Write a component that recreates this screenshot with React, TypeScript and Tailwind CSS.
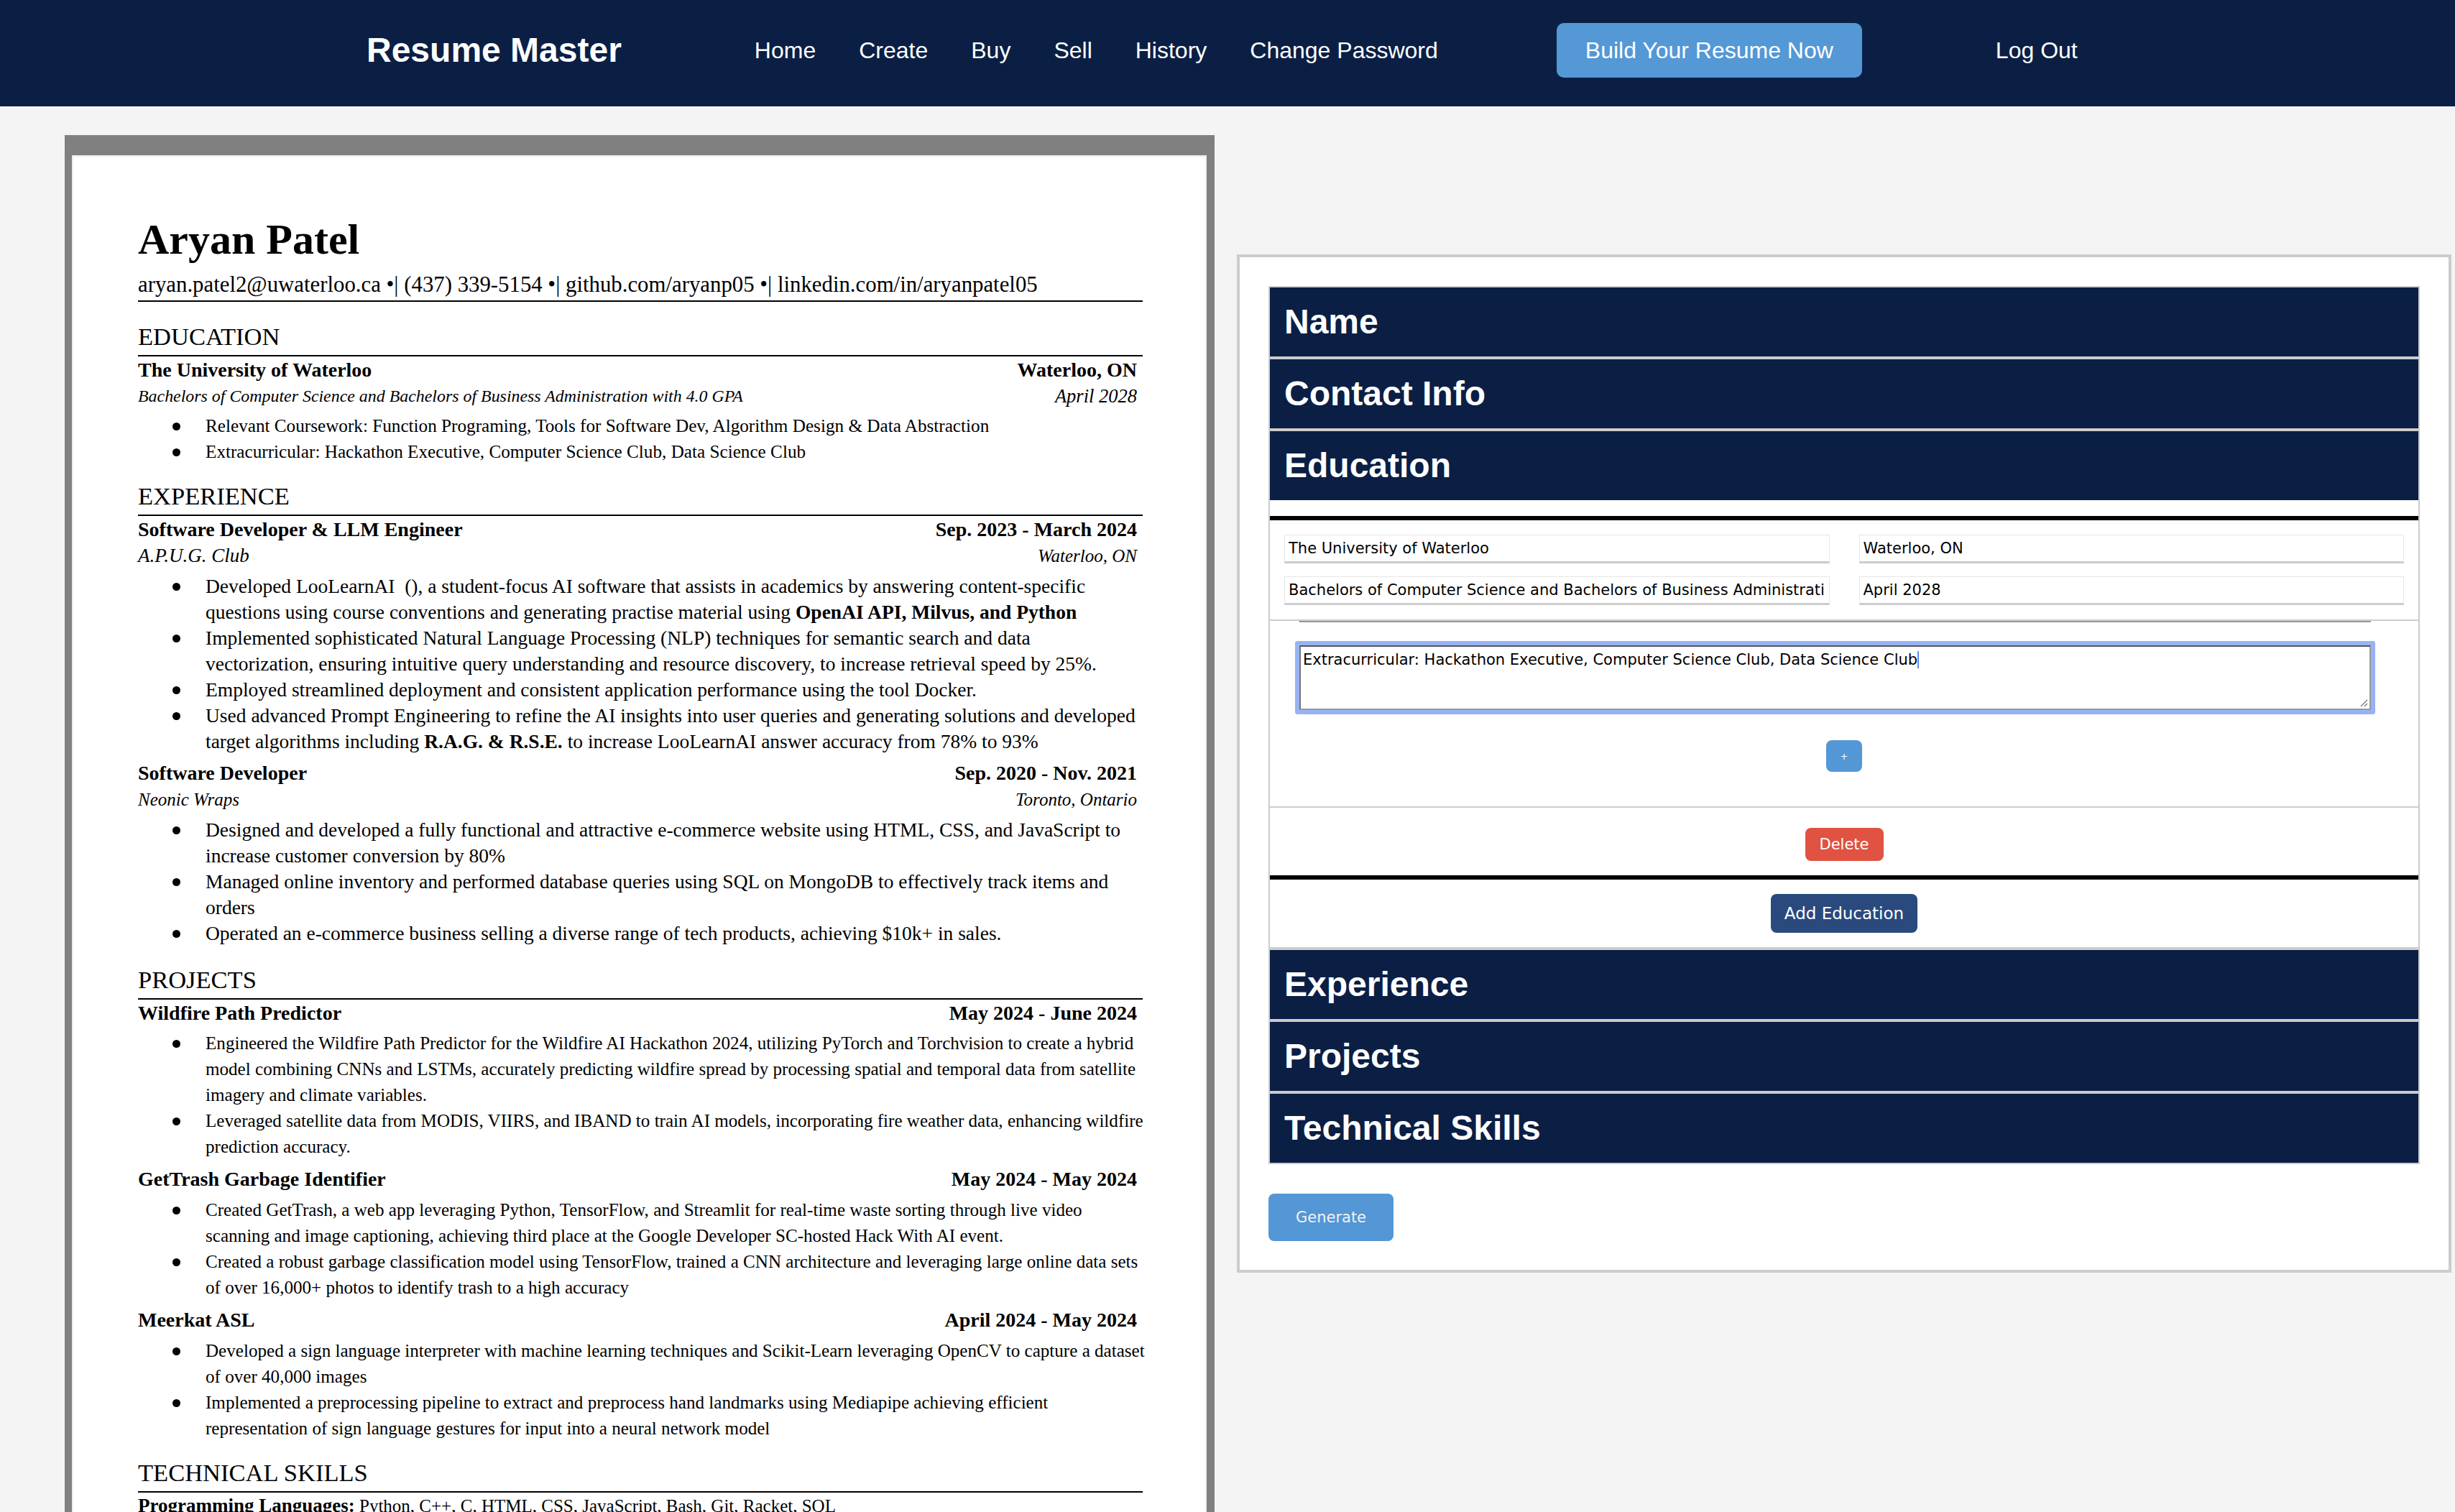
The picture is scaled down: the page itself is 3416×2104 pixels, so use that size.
import React from "react";

const SERIF = "font-['Liberation_Serif','Times_New_Roman',serif]";
const FORM = "font-['DejaVu_Sans',Verdana,sans-serif]";

function NavBar() {
  const links = ["Home", "Create", "Buy", "Sell", "History", "Change Password"];
  return (
    <nav className="h-[148px] bg-[#0b1f45] flex items-center pb-[9px] text-white font-['Liberation_Sans',Arial,sans-serif]">
      <div className="ml-[510px] text-[48px] font-bold leading-none">Resume Master</div>
      <ul className="ml-[185px] flex gap-[60px] text-[32px] leading-none">
        {links.map((l) => (
          <li key={l}>{l}</li>
        ))}
      </ul>
      <button className="ml-[165px] h-[76px] px-[40px] rounded-[10px] bg-[#5498d6] text-[32px] leading-none text-white">
        Build Your Resume Now
      </button>
      <div className="ml-[186px] text-[32px] leading-none">Log Out</div>
    </nav>
  );
}

function Heading({ children, mt }: { children: React.ReactNode; mt: string }) {
  return (
    <div className={`${mt} text-[34.5px] leading-[40px] pb-[6px] border-b-2 border-black`}>{children}</div>
  );
}

function Row({
  left,
  right,
  italic,
  mt,
  leftSize,
  rightSize,
}: {
  left: React.ReactNode;
  right: React.ReactNode;
  italic?: boolean;
  mt?: string;
  leftSize?: string;
  rightSize?: string;
}) {
  return (
    <div
      className={`flex justify-between pr-[8px] h-[37px] leading-[37px] ${mt ?? ""} ${
        italic ? "italic text-[25px]" : "font-bold text-[28px]"
      }`}
    >
      <span className={leftSize ?? ""}>{left}</span>
      <span className={rightSize ?? ""}>{right}</span>
    </div>
  );
}

function Bullet({ children, size }: { children: React.ReactNode; size: string }) {
  return (
    <div className="flex leading-[36px]">
      <div className="w-[94px] shrink-0 pl-[48px] pt-[12.5px]">
        <div className="w-[11px] h-[11px] rounded-full bg-black" />
      </div>
      <div className={`whitespace-nowrap ${size}`}>{children}</div>
    </div>
  );
}

function Resume() {
  const exp = "text-[27.5px]";
  const proj = "text-[25.1px]";
  return (
    <div className="w-[1600px] h-[1916px] shrink-0 bg-[#808080] pt-[28px] pl-[10px] pr-[11px] overflow-hidden">
      <div className={`bg-white border-2 border-[#eeeeee] h-[2000px] pt-[80px] pl-[90px] pr-[87px] text-black ${SERIF}`}>
        <div className="text-[60px] font-bold leading-[70px]">Aryan Patel</div>
        <div className="mt-[10px] text-[30.8px] leading-[36px] pb-[4px] border-b-2 border-black whitespace-nowrap">
          aryan.patel2@uwaterloo.ca •| (437) 339-5154 •| github.com/aryanp05 •| linkedin.com/in/aryanpatel05
        </div>

        <Heading mt="mt-[28px]">EDUCATION</Heading>
        <Row left="The University of Waterloo" right="Waterloo, ON" />
        <Row
          italic
          leftSize="text-[23.9px]"
          rightSize="text-[26.5px]"
          left="Bachelors of Computer Science and Bachelors of Business Administration with 4.0 GPA"
          right="April 2028"
        />
        <div className="mt-[5px]">
          <Bullet size="text-[25.2px]">
            Relevant Coursework: Function Programing, Tools for Software Dev, Algorithm Design &amp; Data Abstraction
          </Bullet>
          <Bullet size="text-[25.2px]">Extracurricular: Hackathon Executive, Computer Science Club, Data Science Club</Bullet>
        </div>

        <Heading mt="mt-[23px]">EXPERIENCE</Heading>
        <Row left="Software Developer & LLM Engineer" right="Sep. 2023 - March 2024" />
        <Row italic leftSize="text-[27px]" left="A.P.U.G. Club" right="Waterloo, ON" />
        <div className="mt-[6px]">
          <Bullet size={exp}>
            Developed LooLearnAI&nbsp; (), a student-focus AI software that assists in academics by answering content-specific
            <br />
            questions using course conventions and generating practise material using{" "}
            <b>OpenAI API, Milvus, and Python</b>
          </Bullet>
          <Bullet size={exp}>
            Implemented sophisticated Natural Language Processing (NLP) techniques for semantic search and data
            <br />
            vectorization, ensuring intuitive query understanding and resource discovery, to increase retrieval speed by 25%.
          </Bullet>
          <Bullet size={exp}>Employed streamlined deployment and consistent application performance using the tool Docker.</Bullet>
          <Bullet size={exp}>
            Used advanced Prompt Engineering to refine the AI insights into user queries and generating solutions and developed
            <br />
            target algorithms including <b>R.A.G. &amp; R.S.E.</b> to increase LooLearnAI answer accuracy from 78% to 93%
          </Bullet>
        </div>
        <Row mt="mt-[7px]" left="Software Developer" right="Sep. 2020 - Nov. 2021" />
        <Row italic left="Neonic Wraps" right="Toronto, Ontario" />
        <div className="mt-[6px]">
          <Bullet size={exp}>
            Designed and developed a fully functional and attractive e-commerce website using HTML, CSS, and JavaScript to
            <br />
            increase customer conversion by 80%
          </Bullet>
          <Bullet size={exp}>
            Managed online inventory and performed database queries using SQL on MongoDB to effectively track items and
            <br />
            orders
          </Bullet>
          <Bullet size={exp}>
            Operated an e-commerce business selling a diverse range of tech products, achieving $10k+ in sales.
          </Bullet>
        </div>

        <Heading mt="mt-[26px]">PROJECTS</Heading>
        <Row left="Wildfire Path Predictor" right="May 2024 - June 2024" />
        <div className="mt-[6px]">
          <Bullet size={proj}>
            Engineered the Wildfire Path Predictor for the Wildfire AI Hackathon 2024, utilizing PyTorch and Torchvision to create a hybrid
            <br />
            model combining CNNs and LSTMs, accurately predicting wildfire spread by processing spatial and temporal data from satellite
            <br />
            imagery and climate variables.
          </Bullet>
          <Bullet size={proj}>
            Leveraged satellite data from MODIS, VIIRS, and IBAND to train AI models, incorporating fire weather data, enhancing wildfire
            <br />
            prediction accuracy.
          </Bullet>
        </div>
        <Row mt="mt-[8px]" left="GetTrash Garbage Identifier" right="May 2024 - May 2024" />
        <div className="mt-[7px]">
          <Bullet size={proj}>
            Created GetTrash, a web app leveraging Python, TensorFlow, and Streamlit for real-time waste sorting through live video
            <br />
            scanning and image captioning, achieving third place at the Google Developer SC-hosted Hack With AI event.
          </Bullet>
          <Bullet size={proj}>
            Created a robust garbage classification model using TensorFlow, trained a CNN architecture and leveraging large online data sets
            <br />
            of over 16,000+ photos to identify trash to a high accuracy
          </Bullet>
        </div>
        <Row mt="mt-[8px]" left="Meerkat ASL" right="April 2024 - May 2024" />
        <div className="mt-[7px]">
          <Bullet size={proj}>
            Developed a sign language interpreter with machine learning techniques and Scikit-Learn leveraging OpenCV to capture a dataset
            <br />
            of over 40,000 images
          </Bullet>
          <Bullet size={proj}>
            Implemented a preprocessing pipeline to extract and preprocess hand landmarks using Mediapipe achieving efficient
            <br />
            representation of sign language gestures for input into a neural network model
          </Bullet>
        </div>

        <Heading mt="mt-[23px]">TECHNICAL SKILLS</Heading>
        <div className="text-[25px] leading-[36px] whitespace-nowrap">
          <b className="text-[27px]">Programming Languages:</b> Python, C++, C, HTML, CSS, JavaScript, Bash, Git, Racket, SQL
        </div>
      </div>
    </div>
  );
}

function SectionHeader({ children }: { children: React.ReactNode }) {
  return (
    <div className="h-[96px] bg-[#0b1f45] flex items-center px-[20px] text-[48px] font-bold text-white font-['Liberation_Sans',Arial,sans-serif]">
      {children}
    </div>
  );
}

function Field({ value }: { value: string }) {
  return (
    <input
      readOnly
      value={value}
      className={`h-[40px] w-full bg-white border border-[#e6e6e6] border-b-[3px] border-b-[#cccccc] px-[5px] text-[21px] text-black outline-none ${FORM}`}
    />
  );
}

function ResizeHandle() {
  return (
    <svg className="absolute right-[2px] bottom-[2px]" width="12" height="12" viewBox="0 0 12 12">
      <line x1="11" y1="2" x2="2" y2="11" stroke="#777" strokeWidth="1.2" />
      <line x1="11" y1="7" x2="7" y2="11" stroke="#777" strokeWidth="1.2" />
    </svg>
  );
}

function FakeTextarea({ text, focused }: { text: string; focused?: boolean }) {
  return (
    <div
      className={`relative ml-[41px] w-[1491px] h-[90px] bg-white border-2 border-t-[#555555] border-l-[#777777] border-r-[#999999] border-b-[#999999] pt-[6px] px-[3px] text-[21px] leading-[25px] text-black ${FORM} ${
        focused ? "rounded-[1px] shadow-[0_0_0_6px_#97b3f5]" : ""
      }`}
    >
      {text}
      {focused && <span className="inline-block w-[2px] h-[24px] bg-[#5b8cf5] align-[-5px]" />}
      <ResizeHandle />
    </div>
  );
}

function EducationContent() {
  return (
    <div className={`bg-white pt-[22px] pb-[20px] ${FORM}`}>
      <div className="border-y-[6px] border-black">
        <div className="pt-[20px] pb-[20px] px-[20px] border-b-2 border-[#cccccc] grid grid-cols-2 gap-x-[41px] gap-y-[18px]">
          <Field value="The University of Waterloo" />
          <Field value="Waterloo, ON" />
          <Field value="Bachelors of Computer Science and Bachelors of Business Administration with 4.0 GPA" />
          <Field value="April 2028" />
        </div>
        <div className="h-[260px] overflow-hidden border-b-2 border-[#cccccc]">
          <div className="-mt-[88px] flex flex-col">
            <FakeTextarea text="Relevant Coursework: Function Programing, Tools for Software Dev, Algorithm Design & Data Abstraction" />
            <div className="mt-[32px]">
              <FakeTextarea focused text="Extracurricular: Hackathon Executive, Computer Science Club, Data Science Club" />
            </div>
            <div className="mt-[42px] flex justify-center">
              <button className="w-[50px] h-[44px] rounded-[8px] bg-[#5497d6] text-white text-[13px] leading-none">+</button>
            </div>
          </div>
        </div>
        <div className="pt-[28px] pb-[20px] flex justify-center">
          <button className="h-[46px] px-[20px] rounded-[8px] bg-[#e05242] text-white text-[21px] leading-none">Delete</button>
        </div>
      </div>
      <div className="mt-[20px] flex justify-center">
        <button className="h-[54px] px-[19px] rounded-[8px] bg-[#2a4a7e] text-white text-[23px] leading-none">
          Add Education
        </button>
      </div>
    </div>
  );
}

function FormPanel() {
  return (
    <div className="ml-[31px] mt-[166px] w-[1690px] shrink-0 border-4 border-[#cccccc] bg-white p-[40px]">
      <div className="border-2 border-[#cccccc] bg-[#cccccc] flex flex-col gap-[4px]">
        <SectionHeader>Name</SectionHeader>
        <SectionHeader>Contact Info</SectionHeader>
        <div>
          <SectionHeader>Education</SectionHeader>
          <EducationContent />
        </div>
        <SectionHeader>Experience</SectionHeader>
        <SectionHeader>Projects</SectionHeader>
        <SectionHeader>Technical Skills</SectionHeader>
      </div>
      <button
        className={`mt-[41px] w-[174px] h-[66px] rounded-[8px] bg-[#5497d6] text-[#f2f2f2] text-[21px] leading-none ${FORM}`}
      >
        Generate
      </button>
    </div>
  );
}

export default function App() {
  return (
    <div className="h-[2104px] overflow-hidden bg-[#f4f4f4]">
      <NavBar />
      <div className="flex items-start pl-[90px] pt-[40px]">
        <Resume />
        <FormPanel />
      </div>
    </div>
  );
}
